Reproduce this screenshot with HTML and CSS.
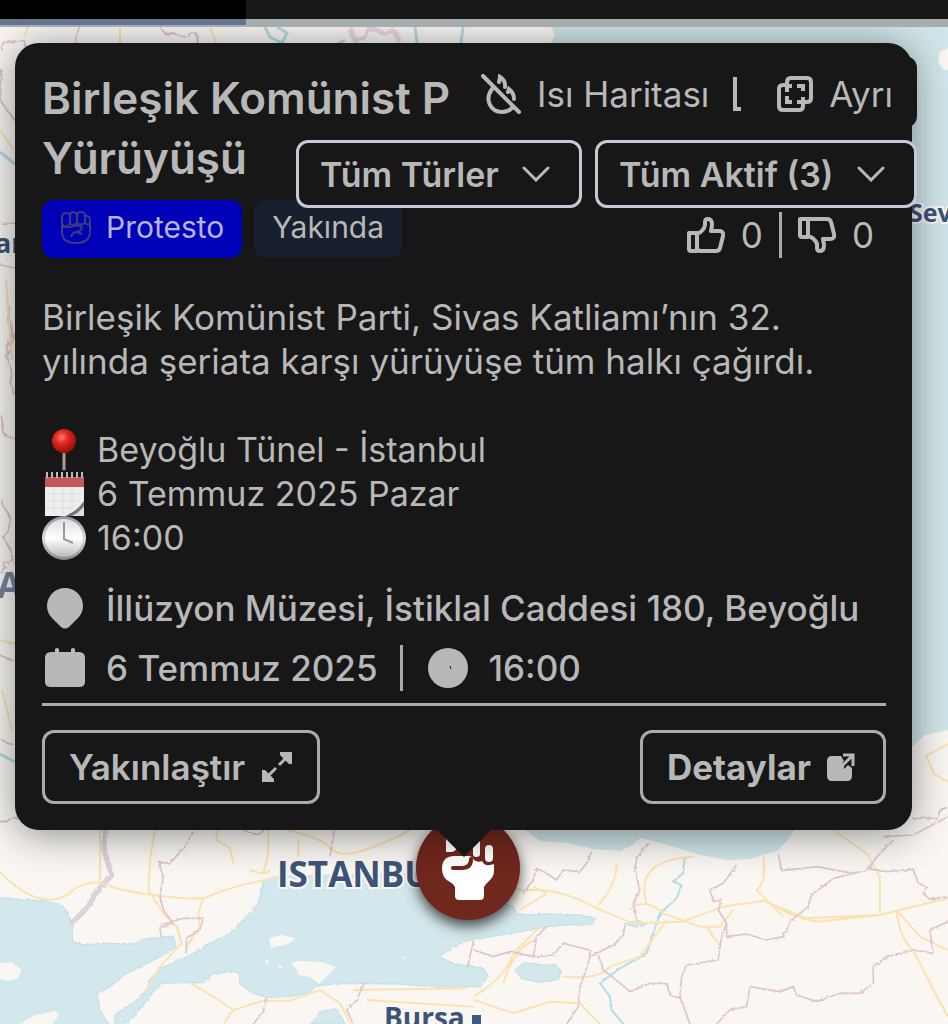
FILE: index.html
```html
<!DOCTYPE html>
<html lang="tr">
<head>
  <meta charset="UTF-8" />
  <meta name="viewport" content="width=device-width, initial-scale=1.0"/>
  <title>Birleşik Komünist Parti Yürüyüşü</title>
  <link rel="stylesheet" href="styles.css">
</head>
<body>

<header class="topbar">
  <div class="tab active"></div>
</header>

<main class="map">
  <svg class="map-bg" viewBox="0 27 948 997" preserveAspectRatio="xMinYMin slice" aria-hidden="true">
    <defs>
      <filter id="rough" x="-5%" y="-5%" width="110%" height="110%">
        <feTurbulence type="fractalNoise" baseFrequency="0.09" numOctaves="3" seed="4"/>
        <feDisplacementMap in="SourceGraphic" scale="9"/>
      </filter>
    </defs>
    <rect y="27" width="948" height="997" fill="#faf7f3"/>

    <!-- black sea -->
    <path fill="#d1e6ea" d="M548 20L555 35 547 50 500 400 525 830 540 841 567 843 594 849 620 851 633 845 640 838 653 841 674 847 700 855 727 860 750 859 777 851 788 840 797 826 880 770 914 745 925 735 948 730V20z"/>
    <path fill="#faf7f3" d="M948 48l-8 4-2 10 6 8h4z"/>

    <g transform="translate(0 810) scale(.3333)">
      <!-- aegean, marmara, gulfs and lakes -->
      <g fill="#d3e8ec" stroke="#c6e1e6" stroke-width="4" filter="url(#rough)">
        <path d="M-20 262L60 268 130 272 185 285 205 310 215 345 218 395 250 405 310 400 400 402 430 388 520 378 528 410 500 430 440 460 380 490 330 530 290 550 300 600 335 660-20 660z"/>
        <path d="M825 200L790 215 775 280 740 320 690 370 620 405 580 430 530 455 480 475 450 510 440 540 400 580 350 610 335 660 365 650 400 620 430 585 460 545 490 520 560 517 610 518 640 490 700 485 718 490 720 520 760 550 800 562 870 560 920 550 955 525 1060 520 1200 522 1300 530 1400 530 1440 530 1465 500 1450 475 1422 470 1360 460 1315 440 1350 420 1390 395 1422 388 1500 375 1560 365 1640 350 1700 345 1780 342 1785 325 1740 315 1640 312 1580 315 1550 310 1540 290 1250 190z"/>
        <path d="M1875 340l40-8 25 10-30 10z"/>
        <path d="M1545 480l30-22 60 8 30-2 20 22-10 24-60 6-50-10z"/>
        <path d="M935 642l25-38 50-8 25 46z"/>
      </g>
      <g fill="#faf7f3">
        <path d="M0 460l35-3 30 22-10 25-30 8-25-6zM60 642l40-25 65-15 12 12-20 28z"/>
        <path d="M808 385l35-10 45 10-25 17-50 12zM872 460l30-8 60 4 46 14-50 52-30-22-30-5-10-20zM795 455l10-8v18zM832 465l18 4-10 8zM1208 438l8 4-6 8z"/>
      </g>
      <!-- lagoon and river -->
      <path fill="none" stroke="#cfc3d2" stroke-width="16" opacity=".7" filter="url(#rough)" d="M315 55L312 120 335 195 290 245 265 290 215 340"/>
      <path fill="none" stroke="#b4dde4" stroke-width="6" filter="url(#rough)" d="M2055 140L2050 190 2020 215 2045 225 2030 265 1980 310 1960 370 1940 430 1860 475 1800 520 1830 560 1835 600 1870 642"/>
      <!-- roads -->
      <g fill="none" stroke="#fae3b0" stroke-width="6" stroke-linejoin="round">
        <path d="M0 185Q60 250 120 265T220 240Q270 205 320 225 T480 258 620 262Q700 225 825 205M300 215L300 60M465 55L450 150 445 240 490 310 530 350 545 400 480 470 440 540M610 265L595 310 600 350 560 410M650 60v30l40 25 10 45M750 180q50 20 60 0M860 60Q960 80 1000 120T1230 60M895 90v50M805 60v70l-15 60M570 518L640 560 700 600 790 572 870 572 960 540 1020 580 1050 640M700 600l-30 42M1060 540L1400 535M1100 570L1422 590"/>
        <path d="M1550 180Q1500 245 1590 240T1790 295L1900 340 2050 335 2170 290 2290 272 2420 325 2640 315 2844 265M2300 275Q2370 320 2450 335L2640 315M1790 290Q1850 230 1850 160M1560 300L1640 250 1600 230M1890 300Q1930 260 1990 310L2100 350 2160 350 2200 300M1940 280Q1900 150 2080 140M2290 140Q2300 220 2270 240L2350 320M2600 130L2640 200 2640 310M2690 300Q2700 390 2740 420L2790 520 2844 620M2690 300l70 80 84 40M1510 520Q1540 420 1600 390M1422 560Q1520 500 1540 430L1620 350M1422 570L1540 610 1650 575 1740 580 1800 642M1690 500Q1800 510 1830 470L1920 440 2000 330M2120 350l40 60M2500 60L2600 130"/>
      </g>
      <!-- province borders -->
      <g fill="none" stroke="#dfc3cd" stroke-width="5" stroke-linejoin="round" filter="url(#rough)">
        <path d="M580 65L555 110 510 160 475 155 490 200 480 260 490 300 520 340 480 355 485 385M485 345L550 325 610 325 600 360 560 385 558 430M1003 60L990 140M730 60q50 25 60 0M1095 515L1070 570 1040 600 1060 642M800 565l-10 40-30 37M1422 388l-20 85"/>
        <path d="M1775 125L1760 160 1740 185 1690 180 1670 210 1640 190 1610 175 1600 210 1570 250M1950 95L1910 145 1905 180 1920 240 1900 280 1910 330M2210 165L2170 220 2130 240 2140 275 2165 270 2155 300 2180 340 2180 380 2240 372 2300 390 2350 380 2375 330 2425 290 2435 255 2500 205 2560 190 2600 180 2640 130 2680 90M2335 130L2345 182 2450 170 2560 190M2600 175L2660 185 2740 178 2755 220 2780 230 2770 250 2790 268 2844 260M2180 340L2165 380 2155 450 2060 465 2045 500 2040 560 2070 642M2844 335L2790 360 2800 430 2740 420 2660 440 2620 470 2620 520 2580 550 2520 550 2450 575 2390 555 2380 530 2340 545 2250 530 2240 590 2190 600 2150 642M1422 420L1480 440 1530 425 1600 440 1610 380 1640 350M1600 440L1660 435 1690 400 1770 420 1770 440 1755 490 1740 530 1735 590 1700 642M1770 440L1840 405 1870 375 1875 345M1795 435L1810 480 1830 495 1890 545 1950 520 2000 520 2010 555 2040 565M2650 80L2740 75 2844 20"/>
      </g>
    </g>

    <!-- strips around the popup -->
    <g fill="none" stroke="#dfc3cd" stroke-width="2" filter="url(#rough)">
      <path d="M0 49l10-7 13-2 3 8M79 27l-3 16M160 27l4 6 20 4 12-4 2 10M2 70l-2 30 14 20M0 222l16 2M0 265l16 4M8 305l4 30-4 20 6 40M2 415l3 20 10 4M2 500l8 20-4 20 8 20-14 12M0 655l14 6M0 738l14 8M0 822l16-6M912 818l24-1 4-10 8 2"/>
      <path stroke-width="5" opacity=".6" d="M350 27l6 16 16-13 24 3 4 10"/>
    </g>
    <path fill="none" stroke="#b4dde4" stroke-width="3" d="M265 27l5 10 12 6 5-10-10-6M345 40l-8 4M415 27l2 16M463 27l-2 16M0 152l15 12M0 754l15 8"/>
    <path fill="none" stroke="#fae3b0" stroke-width="2" d="M28 27l-4 10M120 27v16M210 27l6 16M0 130l14 20M6 280l6 80M0 640l15 4M2 690l10 40M948 744l-22 12 8 18 14 8"/>

    <g class="city" font-size="27">
      <text x="-5" y="253">an</text>
      <text x="-3" y="598" font-size="36" opacity=".7">A</text>
      <text x="909" y="222" font-size="25">Sevas</text>
      <text x="277" y="887" font-size="35">ISTANBUL</text>
      <text x="384" y="1028" font-size="28">Bursa</text>
    </g>
    <path fill="#3d5a87" d="M472 1015h9v9h-9z"/>
  </svg>

  <section class="popup-wrap">
    <div class="marker">
      <svg viewBox="0 0 104 104" width="104" height="104" aria-hidden="true">
        <path fill="#fff" d="M30 18h8q3 0 3 4v10q-2 4-6 4h-5zM43 14h11v20H43zM57 14h7v24q0 3-4 3-3 0-3-3zM69 33q0-4 4-4t4 4v9q0 4-4 4t-4-4z"/>
        <path fill="#fff" d="M37 40h16q3 0 5 4 4 3 8 1 2 5 8 4l4-1v7q0 6-6 11-3 3-4 5v9q0 4-4 4H43q-4 0-4-4V71q-1-3-5-5-8-4-8-13 0-12 11-13z"/>
        <path fill="none" stroke="#70271d" stroke-width="4" stroke-linecap="round" d="M37 52h9q9 0 9-9"/>
      </svg>
    </div>

    <article class="popup">
      <h1 class="title">Birleşik Komünist P<br>Yürüyüşü</h1>

      <div class="meta">
        <span class="badge protest">
          <svg viewBox="0 0 32 34" width="32" height="34" fill="none" stroke="currentColor" stroke-width="2" aria-hidden="true">
            <path d="M2 7q0-4 4-4t4 3q0-4 3-4t4 3q0-3 4-3t4 4q5-1 5 5v10q0 12-14 12T2 22zM10 6v8q-4 5-8 0M17 5v8q-4 4-7 0M25 6v7q-4 3-8 0M30 13q-2 3-5 0M3 17h8q5-3 11 0 0 4-6 5-4 1-5 5M17 22l5 2"/>
          </svg>
          Protesto
        </span>
        <span class="badge soon">Yakında</span>

        <div class="votes">
          <button class="vote" aria-label="Beğen">
            <svg viewBox="0 0 38 36" width="38" height="36" fill="none" stroke="currentColor" stroke-width="4" stroke-linejoin="round" aria-hidden="true">
              <path d="M2 16h8v18H4q-2 0-2-2zM10 17q7-3 8-9V5q0-3 3-3 4 0 4 6l-1 6h9q4 1 3 5l-3 12q-1 3-4 3H14q-3 0-4-2"/>
            </svg>
          </button>
          <span class="count">0</span>
          <span class="line"></span>
          <button class="vote" aria-label="Beğenme">
            <svg viewBox="0 0 38 36" width="38" height="36" fill="none" stroke="currentColor" stroke-width="4" stroke-linejoin="round" aria-hidden="true">
              <path d="M2 2h8v18H4q-2 0-2-2zM10 19q7 2 9 8v4q0 3 3 3 4 0 4-6l-1-6h7q5 0 4-5L33 5q-1-3-4-3H10"/>
            </svg>
          </button>
          <span class="count">0</span>
        </div>
      </div>

      <p class="desc">Birleşik Komünist Parti, Sivas Katliamı’nın 32.<br>yılında şeriata karşı yürüyüşe tüm halkı çağırdı.</p>

      <ul class="notes">
        <li>
          <svg viewBox="0 0 44 44" width="44" height="44" aria-hidden="true">
            <defs><radialGradient id="red" cx=".4" cy=".35" r=".7"><stop offset="0" stop-color="#ff7a68"/><stop offset=".4" stop-color="#e0251f"/><stop offset="1" stop-color="#8c0d0d"/></radialGradient></defs>
            <path stroke="#a99a92" stroke-width="3" d="M22 22v20"/>
            <circle cx="22" cy="13" r="12" fill="url(#red)"/>
          </svg>
          Beyoğlu Tünel - İstanbul
        </li>
        <li>
          <svg viewBox="0 0 44 44" width="44" height="44" aria-hidden="true">
            <path fill="#eee" d="M3 6h39v28L24 44H3z"/>
            <path fill="#c25a5a" d="M3 5h39v10H3z"/>
            <path stroke="#ddd" d="M3 22h39M3 29h35M3 36h28M12 16v26M21 16v26M30 16v22"/>
            <path stroke="#bbb" stroke-width="6" stroke-dasharray="2 3" d="M4 3h37"/>
            <path fill="#777" d="M24 44q10-4 18-15v15z"/>
            <path fill="#ddd" d="M30 44q7-3 12-10v10z"/>
          </svg>
          6 Temmuz 2025 Pazar
        </li>
        <li>
          <svg viewBox="0 0 44 44" width="44" height="44" aria-hidden="true">
            <defs>
              <linearGradient id="rim" x2="0" y2="1"><stop offset="0" stop-color="#8b93a2"/><stop offset=".5" stop-color="#ddd"/><stop offset="1" stop-color="#888"/></linearGradient>
              <linearGradient id="face" x2="0" y2="1"><stop offset="0" stop-color="#ddd"/><stop offset=".5" stop-color="#fff"/><stop offset="1" stop-color="#bbb"/></linearGradient>
            </defs>
            <circle cx="22" cy="22" r="22" fill="url(#rim)"/>
            <circle cx="22" cy="22" r="19" fill="url(#face)"/>
            <path fill="none" stroke="#999" stroke-width="2" d="M22 6v17l9 4"/>
          </svg>
          16:00
        </li>
      </ul>

      <div class="info">
        <div class="row">
          <svg viewBox="0 0 46 42" width="46" height="42" fill="currentColor" aria-hidden="true"><path d="M23 1c10 0 18 8 18 18 0 5-2 9-5 12l-9 9q-4 3-8 0l-9-9c-3-3-5-7-5-12C5 9 13 1 23 1z"/></svg>
          <span>İllüzyon Müzesi, İstiklal Caddesi 180, Beyoğlu</span>
        </div>
        <div class="row">
          <svg viewBox="0 0 46 42" width="46" height="42" fill="currentColor" aria-hidden="true"><path d="M9 5h4V2q2-2 4 0v3h12V2q2-2 4 0v3h4q6 0 6 6v24q0 5-6 5H9q-6 0-6-5V11q0-6 6-6z"/></svg>
          <span>6 Temmuz 2025</span>
          <span class="line"></span>
          <svg viewBox="0 0 46 42" width="46" height="42" aria-hidden="true"><circle cx="23" cy="21" r="20" fill="currentColor"/><path stroke="#171717" d="M25 19l1 3"/></svg>
          <span>16:00</span>
        </div>
      </div>

      <footer class="actions">
        <button class="btn">Yakınlaştır
          <svg viewBox="0 0 32 32" width="32" height="32" aria-hidden="true">
            <path stroke="currentColor" stroke-width="3" d="M4 28l11-11M18 14L29 3"/>
            <path fill="currentColor" d="M19 1h12v12h-3l-9-9zM13 31H1V19h3l9 9z"/>
          </svg>
        </button>
        <button class="btn bold">Detaylar
          <svg viewBox="0 0 28 28" width="28" height="28" aria-hidden="true">
            <path fill="currentColor" d="M5 3h9l3 5-5 5 4 4 5-5 4 3v8q0 5-5 5H5q-5 0-5-5V8q0-5 5-5z"/>
            <path fill="currentColor" d="M10 10h7v7h-7z"/>
            <path fill="none" stroke="currentColor" stroke-width="3" d="M14 14L26 2M16 2h10v11"/>
          </svg>
        </button>
      </footer>
    </article>
  </section>

  <div class="controls">
    <div class="toggles">
      <button class="toggle">
        <svg viewBox="0 0 40 40" width="40" height="40" fill="none" stroke="currentColor" stroke-width="4" stroke-linecap="round" aria-hidden="true">
          <path d="M2 2l36 36M11 15C3 26 10 38 21 38q6 0 10-4M18 8q1-4 1-5 6 4 5 10M27 18l1-3q5 4 5 10"/>
        </svg>
        Isı Haritası
      </button>
      <svg class="sep" viewBox="0 0 8 36" width="8" height="36" fill="none" stroke="currentColor" stroke-width="4" aria-hidden="true"><path d="M2 1v32h6"/></svg>
      <button class="toggle split">
        <svg viewBox="0 0 36 36" width="36" height="36" fill="none" stroke="currentColor" stroke-width="4" aria-hidden="true">
          <path d="M10 9V6q0-4 4-4h16q4 0 4 4v16q0 4-4 4h-3M10 9H6q-4 0-4 4v17q0 4 4 4h16q4 0 4-4v-4M10 9v7M10 16v-6h5M20 10h6v5M10 20v6h5M20 26h6v-5"/>
        </svg>
        Ayrı
      </button>
    </div>
    <div class="filters">
      <label class="filter">
        <select class="types" aria-label="Tür"><option>Tüm Türler</option></select>
        <svg viewBox="0 0 28 16" width="28" height="16" fill="none" stroke="currentColor" stroke-width="3" stroke-linecap="round" aria-hidden="true"><path d="M2 2l12 12L26 2"/></svg>
      </label>
      <label class="filter">
        <select class="status" aria-label="Durum"><option>Tüm Aktif (3)</option></select>
        <svg viewBox="0 0 28 16" width="28" height="16" fill="none" stroke="currentColor" stroke-width="3" stroke-linecap="round" aria-hidden="true"><path d="M2 2l12 12L26 2"/></svg>
      </label>
    </div>
  </div>
</main>

</body>
</html>
```

FILE: styles.css
```css
* {
  box-sizing: border-box;
}
body {
  margin: 0;
  font-family: Inter, "Liberation Sans", sans-serif;
  font-size: 35px;
  line-height: 44px;
  color: #b8b8b8;
  background: #faf7f3;
}
button, select {
  font: inherit;
  color: inherit;
  background: none;
  border: none;
  padding: 0;
  cursor: pointer;
}
svg {
  display: block;
  flex: none;
}
.topbar {
  height: 27px;
  background: #171717;
  border-bottom: 8px solid #a5adae;
}
.tab {
  width: 26%;
  height: 25px;
}
.tab.active {
  background: #000;
  border-bottom: 6px solid #64748f;
}
.map {
  position: relative;
  overflow: hidden;
  min-height: calc(100vh - 27px);
  padding: 16px 36px 0 15px;
}
.map-bg {
  position: absolute;
  top: 0;
  left: 0;
  width: 100%;
  height: 100%;
}
.city {
  font-family: "Open Sans", sans-serif;
  font-weight: 700;
  fill: #3d5478;
  stroke: #faf7f3;
  stroke-width: 4px;
  paint-order: stroke;
}
.popup-wrap {
  position: relative;
}
.marker {
  position: absolute;
  bottom: -90px;
  left: 50%;
  margin-left: -48px;
  width: 104px;
  height: 104px;
  border-radius: 50%;
  background: #70271d;
  box-shadow: 0 6px 14px rgba(0,0,0,0.7);
}
.popup {
  position: relative;
  padding: 25px 26px 26px 27px;
  background: #171717;
  border-radius: 24px;
  box-shadow: 0 4px 40px rgba(0,0,0,0.45);
}
.popup::after {
  content: "";
  position: absolute;
  top: 100%;
  left: 50%;
  margin-left: -27px;
  border: 27px solid transparent;
  border-top-color: #171717;
  border-bottom: none;
}
.title {
  margin: 0 0 12px;
  font-size: 44px;
  line-height: 60px;
  font-weight: 600;
}
.meta {
  display: flex;
  gap: 12px;
}
.badge {
  display: flex;
  align-items: center;
  gap: 14px;
  height: 58px;
  padding: 0 18px 4px;
  border-radius: 12px;
  font-size: 30px;
}
.protest {
  background: #0000b8;
  color: #b4b4e0;
}
.protest svg {
  color: #3c3c78;
}
.soon {
  background: #181f2d;
}
.votes {
  display: flex;
  align-items: center;
  gap: 16px;
  height: 46px;
  margin: 12px 12px 0 auto;
}
.line {
  width: 3px;
  height: 46px;
  background: #a5adae;
}
.desc {
  margin: 37px 0 45px;
}
.notes {
  list-style: none;
  margin: 0 0 25px;
  padding: 0;
  font-size: 34px;
}
.notes li {
  display: flex;
  gap: 11px;
}
.info {
  display: grid;
  gap: 14px;
  padding-bottom: 12px;
  border-bottom: 3px solid #a5adae;
  font-size: 35px;
  font-weight: 500;
}
.row {
  display: flex;
  align-items: center;
  height: 46px;
  gap: 18px;
}
.row .line {
  margin: 0 4px;
}
.actions {
  display: flex;
  justify-content: space-between;
  margin-top: 24px;
}
.btn {
  display: flex;
  align-items: center;
  gap: 16px;
  height: 74px;
  padding: 0 24px;
  border: 3px solid #a5adae;
  border-radius: 12px;
  font-size: 35px;
  font-weight: 600;
}
.btn.bold {
  padding-right: 28px;
  font-weight: 700;
}
.controls {
  position: absolute;
  top: 29px;
  right: 31px;
  display: flex;
  flex-direction: column;
  align-items: flex-end;
  gap: 12px;
}
.toggles {
  display: flex;
  align-items: center;
  gap: 24px;
  height: 72px;
  padding: 4px 24px 0;
  background: #171717;
  border-radius: 12px;
}
.toggle {
  display: flex;
  align-items: center;
  gap: 16px;
}
.toggle.split {
  margin-left: 12px;
}
.filters {
  display: flex;
  gap: 13px;
}
.filter {
  display: grid;
  align-items: center;
}
.filter select,
.filter svg {
  grid-area: 1 / 1;
}
.filter select {
  appearance: none;
  height: 68px;
  padding: 2px 80px 0 21px;
  background: #171717;
  border: 3px solid #c4cad6;
  border-radius: 12px;
  font-size: 34px;
  font-weight: 600;
}
.filter svg {
  justify-self: end;
  margin-right: 32px;
  pointer-events: none;
}
```
